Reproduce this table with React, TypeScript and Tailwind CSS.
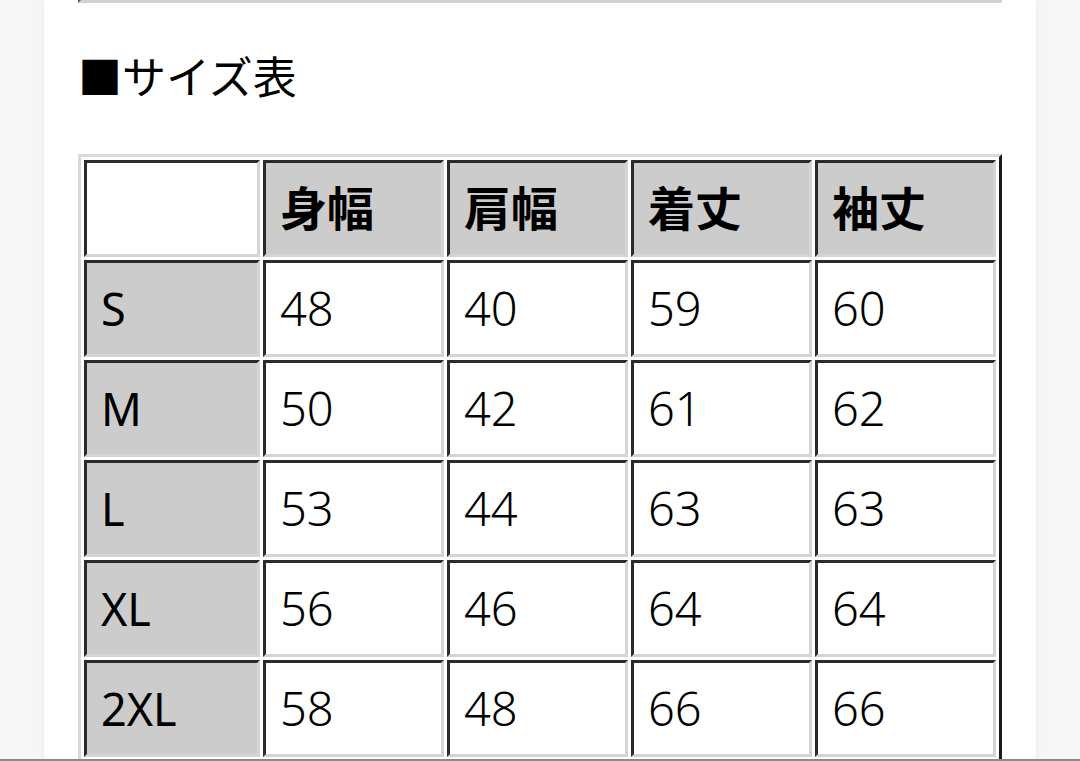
import type { JSX } from "react";

const headers = ["身幅", "肩幅", "着丈", "袖丈"];

const rows: { size: string; values: number[] }[] = [
  { size: "S", values: [48, 40, 59, 60] },
  { size: "M", values: [50, 42, 61, 62] },
  { size: "L", values: [53, 44, 63, 63] },
  { size: "XL", values: [56, 46, 64, 64] },
  { size: "2XL", values: [58, 48, 66, 66] },
];

const cell =
  "h-[97px] border-[3px] border-t-[#2b2b2b] border-l-[#2b2b2b] border-b-[#d4d4d4] border-r-[#d4d4d4] pl-[14px] text-left align-middle";

export default function App(): JSX.Element {
  return (
    <div className="flex h-[761px] w-[1080px] flex-col overflow-hidden bg-[#f6f6f6] font-['Noto_Sans','Noto_Sans_CJK_JP',sans-serif] text-black">
      <div className="flex min-h-0 flex-1 justify-center">
        <div className="w-[992px] overflow-hidden bg-white px-[34px] shadow-[0_0_6px_rgba(0,0,0,0.06)]">
          <div className="h-[3px] border-b-[3px] border-l-[3px] border-b-[#d2d2d2] border-l-[#555]" />
          <h2 className="mt-[46px] text-[44px] leading-[56px] font-normal">■サイズ表</h2>
          <table className="mt-[49px] table-fixed border-separate border-spacing-[3px] border-[3px] border-t-[#d9d9d9] border-l-[#d9d9d9] border-b-[#1a1a1a] border-r-[#1a1a1a] text-[47px]">
            <colgroup>
              <col className="w-[176px]" />
              <col className="w-[181px]" />
              <col className="w-[181px]" />
              <col className="w-[181px]" />
              <col className="w-[181px]" />
            </colgroup>
            <thead>
              <tr>
                <th className={`${cell} bg-white`} />
                {headers.map((h) => (
                  <th key={h} className={`${cell} bg-[#cccccc] font-bold`}>
                    {h}
                  </th>
                ))}
              </tr>
            </thead>
            <tbody>
              {rows.map((r) => (
                <tr key={r.size}>
                  <th className={`${cell} bg-[#cccccc] text-[45px] font-normal`}>{r.size}</th>
                  {r.values.map((v, i) => (
                    <td key={i} className={`${cell} bg-white font-light`}>
                      {v}
                    </td>
                  ))}
                </tr>
              ))}
            </tbody>
          </table>
        </div>
      </div>
      <div className="h-[2px] bg-[#8a8a8a]" />
    </div>
  );
}
